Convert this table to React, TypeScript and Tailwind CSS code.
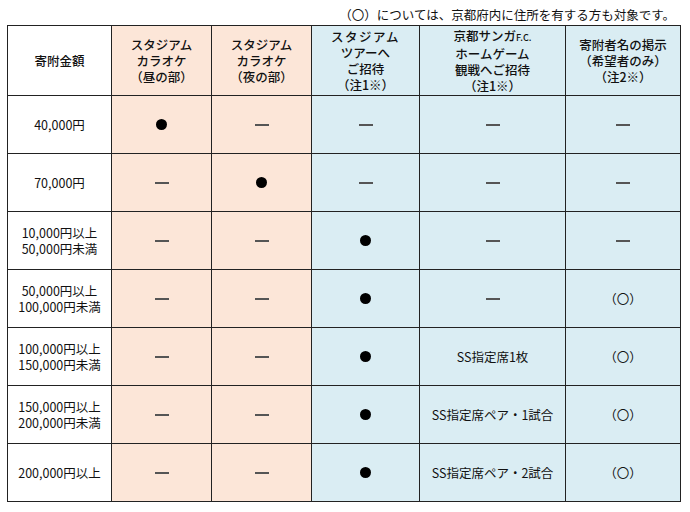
import React from "react";

const PEACH = "bg-[#fce6d8]";
const BLUE = "bg-[#daedf3]";

const Dot = () => <div className="mx-auto w-[11px] h-[11px] rounded-full bg-black" />;
const Dash = () => <div className="mx-auto w-[14px] h-[2px] bg-[#555]" />;

type Cell = "dot" | "dash" | string;

const rows: { amount: string[]; cells: Cell[] }[] = [
  { amount: ["40,000円"], cells: ["dot", "dash", "dash", "dash", "dash"] },
  { amount: ["70,000円"], cells: ["dash", "dot", "dash", "dash", "dash"] },
  { amount: ["10,000円以上", "50,000円未満"], cells: ["dash", "dash", "dot", "dash", "dash"] },
  { amount: ["50,000円以上", "100,000円未満"], cells: ["dash", "dash", "dot", "dash", "（〇）"] },
  { amount: ["100,000円以上", "150,000円未満"], cells: ["dash", "dash", "dot", "SS指定席1枚", "（〇）"] },
  { amount: ["150,000円以上", "200,000円未満"], cells: ["dash", "dash", "dot", "SS指定席ペア・1試合", "（〇）"] },
  { amount: ["200,000円以上"], cells: ["dash", "dash", "dot", "SS指定席ペア・2試合", "（〇）"] },
];

const colBg = [PEACH, PEACH, BLUE, BLUE, BLUE];
const leftBorder = ["border-l-[#666]", "border-l-[#777]", "border-l-[#111]", "border-l-[#222]", "border-l-[#666]"];

const renderCell = (c: Cell) => {
  if (c === "dot") return <Dot />;
  if (c === "dash") return <Dash />;
  return <span>{c}</span>;
};

export default function App() {
  return (
    <div
      className="w-[690px] h-[512px] bg-white text-[#111] relative"
      style={{ fontFamily: '"Noto Sans CJK JP", "Noto Sans", sans-serif' }}
    >
      <div className="pt-[6px] pr-[15px] text-right text-[12.5px] leading-[17px] h-[25px]">
        （〇）については、京都府内に住所を有する方も対象です。
      </div>
      <table className="ml-[7px] border-collapse table-fixed w-[673px]">
        <colgroup>
          <col className="w-[104px]" />
          <col className="w-[100px]" />
          <col className="w-[100px]" />
          <col className="w-[108px]" />
          <col className="w-[146px]" />
          <col className="w-[115px]" />
        </colgroup>
        <thead>
          <tr className="h-[70px] text-[12.5px] leading-[16px] font-medium">
            <th className="border border-[#222] bg-white font-medium">寄附金額</th>
            <th className={`border border-[#222] ${leftBorder[0]} ${PEACH} font-medium`}>
              スタジアム<br />カラオケ<br />（昼の部）
            </th>
            <th className={`border border-[#222] ${leftBorder[1]} ${PEACH} font-medium`}>
              スタジアム<br />カラオケ<br />（夜の部）
            </th>
            <th className={`border border-[#222] ${leftBorder[2]} ${BLUE} font-medium`}>
              <span className="tracking-[1.5px]">スタジアム</span><br />ツアーへ<br />ご招待<br />（注1※）
            </th>
            <th className={`border border-[#222] ${leftBorder[3]} ${BLUE} font-medium`}>
              京都サンガ<span className="text-[9px]">F.C.</span><br />ホームゲーム<br />観戦へご招待<br />（注1※）
            </th>
            <th className={`border border-[#222] ${leftBorder[4]} ${BLUE} font-medium`}>
              寄附者名の掲示<br />（希望者のみ）<br />（注2※）
            </th>
          </tr>
        </thead>
        <tbody>
          {rows.map((r, i) => (
            <tr key={i} className="h-[58px] text-[12.5px] leading-[16px]">
              <td className="border border-[#222] bg-white text-center">
                {r.amount.map((a, j) => (
                  <div key={j}>{a}</div>
                ))}
              </td>
              {r.cells.map((c, j) => (
                <td
                  key={j}
                  className={`border border-[#222] ${leftBorder[j]} ${colBg[j]} text-center align-middle`}
                >
                  {renderCell(c)}
                </td>
              ))}
            </tr>
          ))}
        </tbody>
      </table>
    </div>
  );
}
